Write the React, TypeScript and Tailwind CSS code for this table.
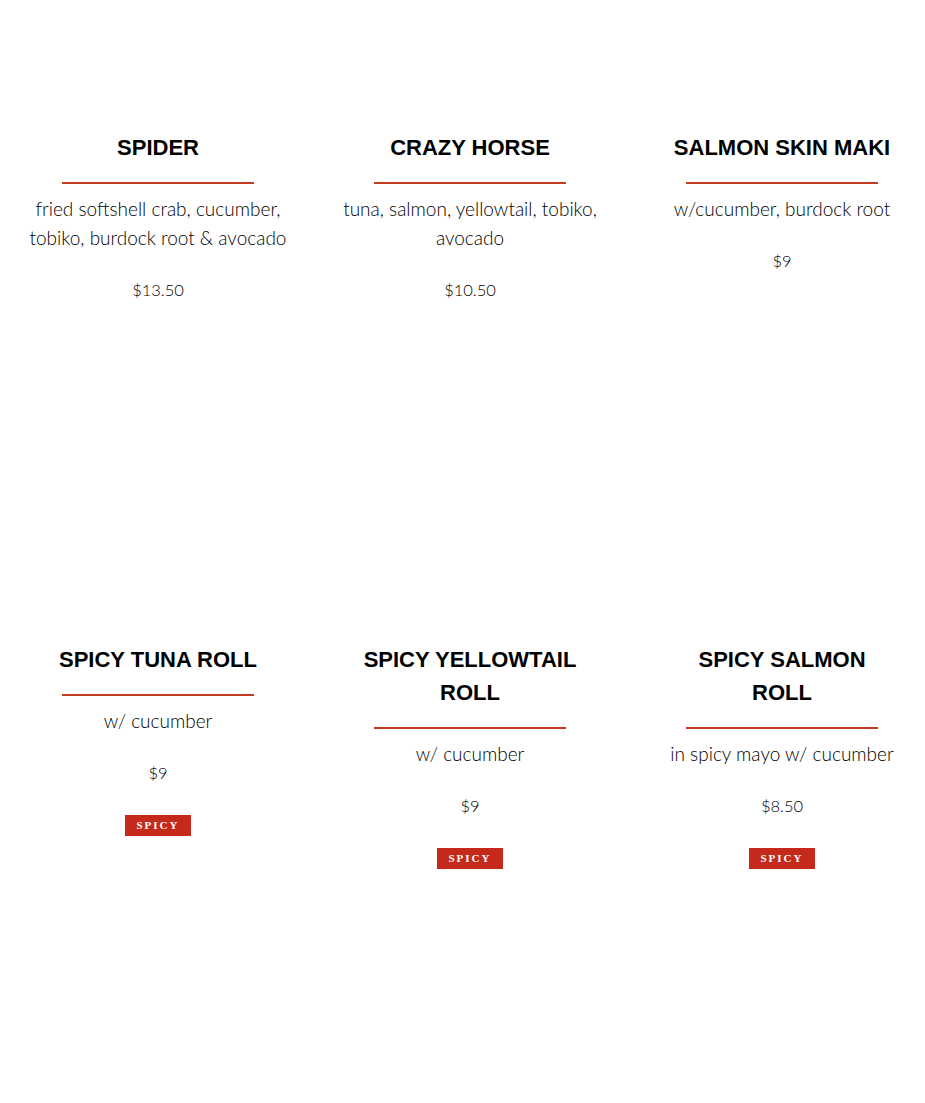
import React from "react";

type Item = { title: string; desc: string; price: string; spicy?: boolean };

const rows: Item[][] = [
  [
    { title: "SPIDER", desc: "fried softshell crab, cucumber, tobiko, burdock root & avocado", price: "$13.50" },
    { title: "CRAZY HORSE", desc: "tuna, salmon, yellowtail, tobiko, avocado", price: "$10.50" },
    { title: "SALMON SKIN MAKI", desc: "w/cucumber, burdock root", price: "$9" },
  ],
  [
    { title: "SPICY TUNA ROLL", desc: "w/ cucumber", price: "$9", spicy: true },
    { title: "SPICY YELLOWTAIL ROLL", desc: "w/ cucumber", price: "$9", spicy: true },
    { title: "SPICY SALMON ROLL", desc: "in spicy mayo w/ cucumber", price: "$8.50", spicy: true },
  ],
];

function Card({ item }: { item: Item }) {
  return (
    <div className="flex flex-col items-center text-center">
      <h3 className="w-[222px] font-['Liberation_Sans',Arial,sans-serif] text-[22px] leading-[33px] font-bold text-black">
        {item.title}
      </h3>
      <div className="mt-[18px] h-[2px] w-[192px] bg-[#c23a22]" />
      <p className="mt-[10px] font-['Lato',sans-serif] text-[19px] leading-[29px] font-light text-black">
        {item.desc}
      </p>
      <p className="mt-[24px] font-['Lato',sans-serif] text-[16.5px] leading-[29px] font-light text-black">
        {item.price}
      </p>
      {item.spicy && (
        <div className="mt-[27px] flex h-[21px] w-[66px] items-center justify-center bg-[#c4291b] font-['Liberation_Serif',serif] text-[11px] font-bold tracking-[2px] text-white">
          SPICY
        </div>
      )}
    </div>
  );
}

export default function App() {
  return (
    <div className="min-h-[1103px] w-full bg-white pt-[131px]">
      {rows.map((row, i) => (
        <div key={i} className="grid h-[512px] grid-cols-[264px_264px_264px] gap-x-[48px] pl-[26px]">
          {row.map((it) => (
            <Card key={it.title} item={it} />
          ))}
        </div>
      ))}
    </div>
  );
}
